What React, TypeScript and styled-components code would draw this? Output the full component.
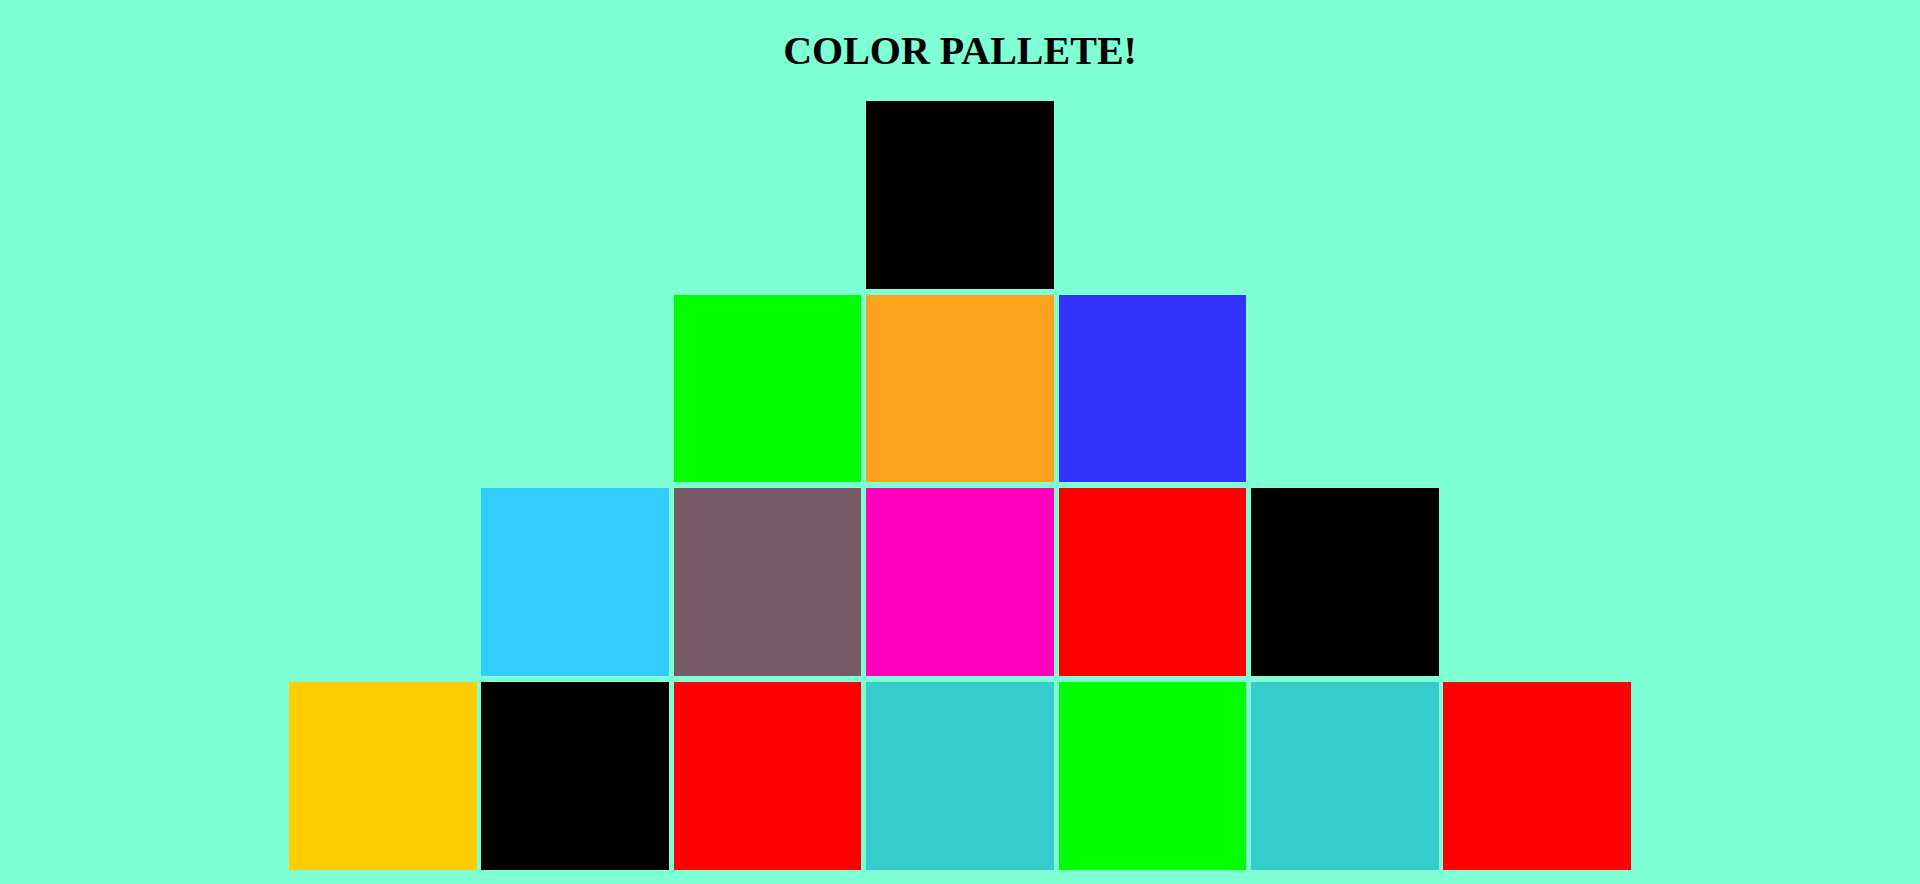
import React from "react";
import styled, { createGlobalStyle } from "styled-components";

const Global = createGlobalStyle`
  html, body { margin: 0; padding: 0; background: #7fffd4; }
  body { font-family: "Liberation Serif", "Times New Roman", serif; }
`;

const Page = styled.div`
  display: flex;
  flex-direction: column;
  align-items: center;
  padding-top: 27.5px;
  width: 1920px;
  height: 884px;
  box-sizing: border-box;
  overflow: hidden;
`;

const Title = styled.h1`
  margin: 0 0 27.5px 0;
  font-size: 40px;
  line-height: 46px;
  font-weight: bold;
  color: #000;
`;

const Pyramid = styled.div`
  display: flex;
  flex-direction: column;
  align-items: center;
  gap: 6.2px;
`;

const Row = styled.div`
  display: flex;
  gap: 4.9px;
`;

const Tile = styled.div<{ $c: string }>`
  width: 187.5px;
  height: 187.5px;
  background: ${(p) => p.$c};
`;

const rows: string[][] = [
  ["#000000"],
  ["#00ff00", "#ffa31f", "#3333ff"],
  ["#33ccff", "#775a66", "#ff00bf", "#ff0000", "#000000"],
  ["#ffcc00", "#000000", "#ff0000", "#36cbcd", "#00ff00", "#36cbcd", "#ff0000"],
];

export default function App() {
  return (
    <>
      <Global />
      <Page>
        <Title>COLOR PALLETE!</Title>
        <Pyramid>
          {rows.map((r, i) => (
            <Row key={i}>
              {r.map((c, j) => (
                <Tile key={j} $c={c} />
              ))}
            </Row>
          ))}
        </Pyramid>
      </Page>
    </>
  );
}
